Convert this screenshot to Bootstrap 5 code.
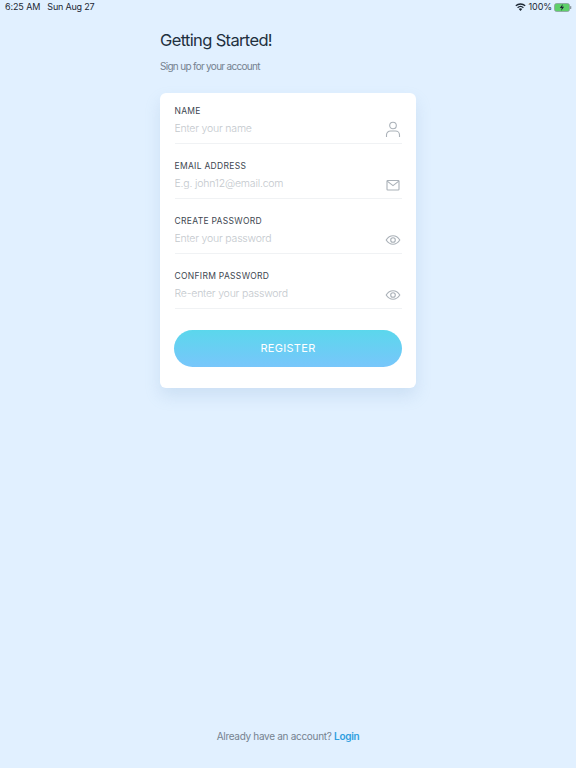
<!DOCTYPE html>
<html lang="en">
  <head>
    <meta charset="UTF-8" />
    <meta name="viewport" content="width=device-width, initial-scale=1.0" />
    <title>Getting Started</title>
    <link
      href="https://cdn.jsdelivr.net/npm/bootstrap@5.3.3/dist/css/bootstrap.min.css"
      rel="stylesheet"
    />
    <style>
      body {
        background: #e1f0ff;
        font-family: Inter, "Liberation Sans", sans-serif;
        height: 768px;
        overflow: hidden;
      }
      .status-row {
        height: 14px;
        padding: 0 4px 0 5px;
        font-size: 9px;
        line-height: 14px;
        letter-spacing: -0.1px;
        color: #1c2733;
      }
      .status-date {
        margin-left: 7px;
        letter-spacing: -0.2px;
      }
      .status-icons {
        gap: 2px;
      }
      .status-wifi {
        margin-right: 1px;
      }
      .signup-col {
        width: 256px;
      }
      .signup-title {
        font-size: 16.5px;
        line-height: 22px;
        font-weight: 400;
        letter-spacing: -0.65px;
        color: #1f3040;
        margin: 15px 0 0;
      }
      .signup-sub {
        font-size: 10px;
        line-height: 14px;
        letter-spacing: -0.7px;
        color: #75828f;
        margin: 8px 0 0;
      }
      .signup-card {
        margin-top: 20px;
        padding: 12px 14px 21px 14.5px;
        border: 0;
        border-radius: 6px;
        box-shadow: 0 8px 16px rgba(120, 160, 200, 0.2);
      }
      .field-block {
        height: 55px;
      }
      .field-label {
        display: block;
        margin: 0;
        font-size: 8.5px;
        line-height: 12px;
        font-weight: 400;
        letter-spacing: 0.3px;
        color: #3d4650;
      }
      .field-row {
        height: 27px;
        padding-bottom: 5px;
        border-bottom: 1px solid #f0f2f4;
      }
      .field-input {
        border: 0;
        outline: 0;
        padding: 0;
        width: 190px;
        height: 16px;
        margin-top: 4px;
        font-size: 10.5px;
        font-weight: 300;
        line-height: 16px;
        letter-spacing: -0.2px;
        color: #3d4650;
        background: transparent;
      }
      .field-input::placeholder {
        color: #c3c8cd;
        opacity: 1;
      }
      .field-icon {
        flex: none;
        margin-top: 4px;
        margin-right: 1px;
        margin-bottom: -7px;
      }
      .register-btn {
        display: block;
        width: 228px;
        height: 37px;
        margin: 5px 0 0 -0.5px;
        border: 0;
        border-radius: 19px;
        background: linear-gradient(180deg, #5bd7ec, #78c6fb);
        color: #fff;
        font-size: 11px;
        letter-spacing: 0.3px;
      }
      .login-note {
        font-size: 10px;
        line-height: 14px;
        letter-spacing: -0.3px;
        color: #75828f;
        margin-bottom: 25px;
      }
      .login-link {
        color: #2f9fe0;
        font-weight: 600;
        text-decoration: none;
      }
    </style>
  </head>
  <body>
    <div class="d-flex flex-column h-100">
      <!--STATUS BAR-->
      <div class="status-row d-flex justify-content-between">
        <div class="d-flex">
          <span>6:25 AM</span>
          <span class="status-date">Sun Aug 27</span>
        </div>
        <div class="status-icons d-flex align-items-center">
          <svg class="status-wifi" width="11" height="8" viewBox="0 0 11 8">
            <path d="M5.5 8 3.8 6a2.500 2.500 0 0 1 3.400 0Z" fill="#1c2733" />
            <path d="M2.600 4.700a4.300 4.300 0 0 1 5.800 0" fill="none" stroke="#1c2733" stroke-width="1.300" />
            <path d="M.8 2.800a7 7 0 0 1 9.400 0" fill="none" stroke="#1c2733" stroke-width="1.300" />
          </svg>
          <span>100%</span>
          <svg width="18" height="9" viewBox="0 0 18 9">
            <rect x=".5" y=".5" width="15" height="8" rx="2" fill="#5fd06b" stroke="#8a969f" stroke-width=".7" />
            <rect x="16" y="3" width="1.300" height="3" rx=".6" fill="#8a969f" />
            <path d="M8.800 1 5.800 5h2l-.7 3 3-4.200h-2Z" fill="#1c2733" />
          </svg>
        </div>
      </div>

      <!--SIGN UP-->
      <main class="signup-col mx-auto">
        <h1 class="signup-title">Getting Started!</h1>
        <p class="signup-sub">Sign up for your account</p>
        <form class="card signup-card" action="" method="post">
          <div class="field-block">
            <label for="nameInput" class="field-label">NAME</label>
            <div class="field-row d-flex justify-content-between">
              <input type="text" class="field-input" id="nameInput" placeholder="Enter your name" />
              <svg class="field-icon" width="16" height="17" viewBox="0 0 16 17" fill="none" stroke="#aab1b8" stroke-width="1.100">
                <circle cx="8" cy="4.500" r="3.300" />
                <path d="M1.500 16v-2a4 4 0 0 1 4-4h5a4 4 0 0 1 4 4v2" />
              </svg>
            </div>
          </div>
          <div class="field-block">
            <label for="emailInput" class="field-label">EMAIL ADDRESS</label>
            <div class="field-row d-flex justify-content-between">
              <input type="text" class="field-input" id="emailInput" placeholder="E.g. john12@email.com" />
              <svg class="field-icon" width="16" height="17" viewBox="0 0 16 17" fill="none" stroke="#aab1b8" stroke-width="1.100">
                <rect x="2" y="4.500" width="12" height="9.500" rx=".8" />
                <path d="M2.200 5.100 8 9.600l5.800-4.500" />
              </svg>
            </div>
          </div>
          <div class="field-block">
            <label for="passwordInput" class="field-label">CREATE PASSWORD</label>
            <div class="field-row d-flex justify-content-between">
              <input type="password" class="field-input" id="passwordInput" placeholder="Enter your password" />
              <svg class="field-icon" width="16" height="17" viewBox="0 0 16 17" fill="none" stroke="#aab1b8" stroke-width="1.100">
                <path d="M1.200 9C3 6.200 5.300 4.800 8 4.800s5 1.400 6.800 4.200c-1.800 2.800-4.100 4.200-6.800 4.200S3 11.800 1.200 9Z" />
                <circle cx="8" cy="9" r="2.300" />
              </svg>
            </div>
          </div>
          <div class="field-block">
            <label for="confirmInput" class="field-label">CONFIRM PASSWORD</label>
            <div class="field-row d-flex justify-content-between">
              <input type="password" class="field-input" id="confirmInput" placeholder="Re-enter your password" />
              <svg class="field-icon" width="16" height="17" viewBox="0 0 16 17" fill="none" stroke="#aab1b8" stroke-width="1.100">
                <path d="M1.200 9C3 6.200 5.300 4.800 8 4.800s5 1.400 6.800 4.200c-1.800 2.800-4.100 4.200-6.800 4.200S3 11.800 1.200 9Z" />
                <circle cx="8" cy="9" r="2.300" />
              </svg>
            </div>
          </div>
          <button class="btn register-btn" type="submit">REGISTER</button>
        </form>
      </main>

      <!--LOGIN-->
      <p class="login-note text-center mt-auto">
        Already have an account? <a class="login-link" href="#">Login</a>
      </p>
    </div>
  </body>
</html>
